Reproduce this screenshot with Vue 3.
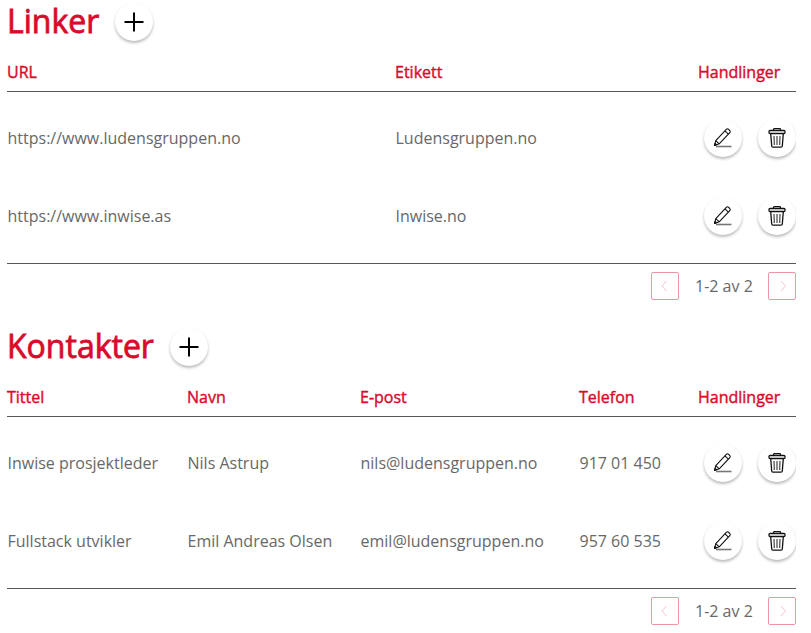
<template>
  <main class="page">
    <section v-for="s in sections" :key="s.title" class="section">

      <!-- Tittel + legg til -->
      <div class="section-head">
        <h1>{{ s.title }}</h1>
        <button class="round-btn" aria-label="Legg til">
          <svg width="20" height="20" viewBox="0 0 20 20" fill="none" stroke="#000" stroke-width="2">
            <path d="M10 0.5V19.5M0.5 10H19.5" />
          </svg>
        </button>
      </div>

      <!-- Tabell -->
      <div :class="['row', 'header', s.layout]">
        <span v-for="c in s.columns" :key="c">{{ c }}</span>
        <span>Handlinger</span>
      </div>
      <div class="rows">
        <div v-for="r in s.rows" :key="r[0]" :class="['row', 'item', s.layout]">
          <span v-for="cell in r" :key="cell">{{ cell }}</span>
          <div class="actions">
            <button class="round-btn" aria-label="Rediger">
              <svg width="20" height="22" viewBox="0 0 20 22" fill="none" stroke="#111" stroke-width="1.1" stroke-linejoin="round">
                <path d="M1.5 18.4L2.8 13.6L13.3 2.3Q14.3 1.3 15.4 2.2L16.8 3.5Q17.8 4.6 16.8 5.6L6.2 16.8Z" />
                <path d="M12 3.8L15.4 7.1M2.8 13.6L6.2 16.8M1.5 18.4L2.1 16.4L3.5 17.7Z" />
                <path d="M3 19.5H18.5" stroke="#777" stroke-width="1.6" />
              </svg>
            </button>
            <button class="round-btn" aria-label="Slett">
              <svg width="18" height="20" viewBox="0 0 18 20" fill="none" stroke="#111" stroke-width="1.3" stroke-linejoin="round">
                <path d="M5.5 2.4V1.5Q5.5 0.7 6.3 0.7H11.7Q12.5 0.7 12.5 1.5V2.4" />
                <rect x="1" y="2.5" width="16" height="3" rx="1" />
                <path d="M2.7 5.6L3.7 18Q3.8 19.2 5 19.2H13Q14.2 19.2 14.3 18L15.3 5.6" />
                <path d="M6 8L6.3 17M9 8V17M12 8L11.7 17" stroke="#333" stroke-width="1.1" />
              </svg>
            </button>
          </div>
        </div>
      </div>

      <!-- Paginering -->
      <div class="pager">
        <button class="page-btn" disabled aria-label="Forrige">
          <svg width="8" height="12" viewBox="0 0 8 12"><path d="M5.5 1L1 6L5.5 11" /></svg>
        </button>
        <span>1-2 av 2</span>
        <button class="page-btn" disabled aria-label="Neste">
          <svg width="8" height="12" viewBox="0 0 8 12"><path d="M3 1L7.5 6L3 11" /></svg>
        </button>
      </div>
    </section>
  </main>
</template>

<script setup>
const sections = [
  {
    title: 'Linker',
    layout: 'links',
    columns: ['URL', 'Etikett'],
    rows: [
      ['https://www.ludensgruppen.no', 'Ludensgruppen.no'],
      ['https://www.inwise.as', 'Inwise.no']
    ]
  },
  {
    title: 'Kontakter',
    layout: 'contacts',
    columns: ['Tittel', 'Navn', 'E-post', 'Telefon'],
    rows: [
      ['Inwise prosjektleder', 'Nils Astrup', 'nils@ludensgruppen.no', '917 01 450'],
      ['Fullstack utvikler', 'Emil Andreas Olsen', 'emil@ludensgruppen.no', '957 60 535']
    ]
  }
]
</script>

<style>
body { background: #fff; overflow: hidden; }
</style>

<style scoped>
.page {
  width: 789px;
  height: 633px;
  padding-left: 7px;
  overflow: hidden;
  font-family: "Open Sans", sans-serif;
  font-size: 16px;
  font-weight: 400;
  line-height: 22px;
  color: #686868;
}
.section { height: 325px; }

.section-head {
  display: flex;
  align-items: center;
  gap: 16px;
  height: 44px;
}
h1 {
  margin: 0;
  padding-bottom: 2px;
  font-size: 32px;
  line-height: 42px;
  font-weight: 400;
  color: #d90a2c;
  -webkit-text-stroke: 0.8px #d90a2c;
}

.round-btn {
  display: flex;
  align-items: center;
  justify-content: center;
  width: 38px;
  height: 38px;
  padding: 0;
  border: none;
  border-radius: 50%;
  background: #fff;
  box-shadow: 0 2px 3px rgba(0, 0, 0, 0.27);
}

.row { display: grid; align-items: center; white-space: nowrap; }
.links { grid-template-columns: 388px 303px 98px; }
.contacts { grid-template-columns: 180px 173px 219px 119px 98px; }
.header {
  box-sizing: border-box;
  height: 48px;
  padding-top: 9px;
  border-bottom: 1px solid #575757;
  font-weight: 400;
  color: #d90a2c;
  -webkit-text-stroke: 0.4px #d90a2c;
}
.rows { padding: 7px 0 8px; border-bottom: 1px solid #575757; }
.item { height: 78px; }
.item span { padding-left: 0.5px; }
.actions { display: flex; justify-content: flex-end; gap: 16px; }

.pager {
  display: flex;
  align-items: center;
  justify-content: flex-end;
  gap: 16px;
  padding-top: 8px;
}
.pager span { width: 57px; white-space: nowrap; }
.page-btn {
  display: flex;
  align-items: center;
  justify-content: center;
  box-sizing: border-box;
  width: 28px;
  height: 28px;
  padding: 0;
  border: 1px solid #f095a3;
  border-radius: 2px;
  background: #fff;
}
.page-btn path { fill: none; stroke: #f8c3cb; stroke-width: 1; }
</style>
